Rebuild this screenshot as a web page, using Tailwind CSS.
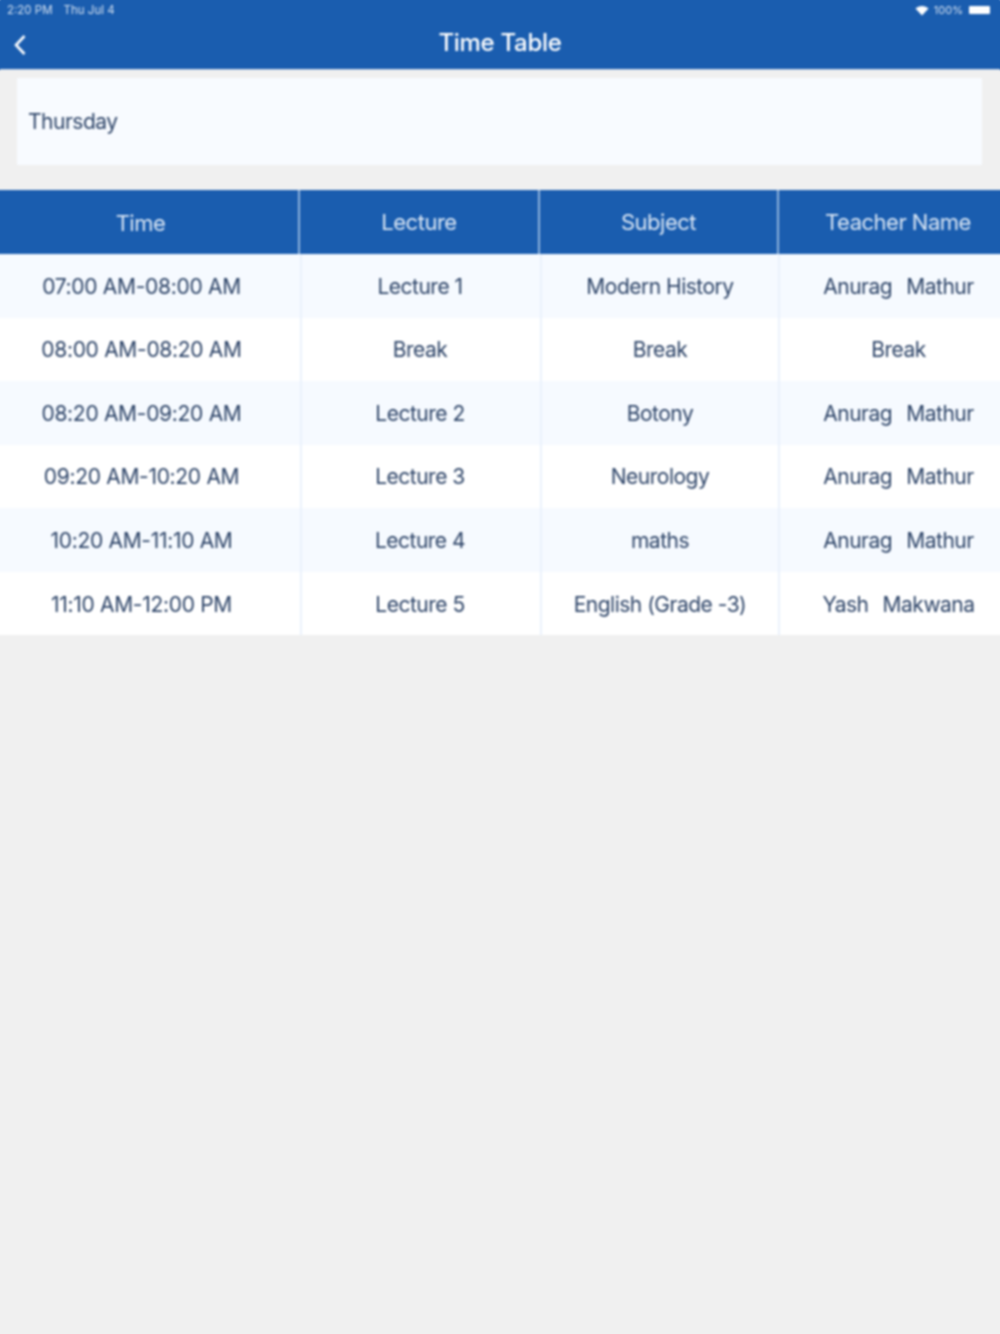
<!DOCTYPE html>
<html lang="en">
<head>
    <meta charset="UTF-8">
    <meta name="viewport" content="width=device-width, initial-scale=1.0">
    <title>Time Table</title>
    <script src="https://cdn.jsdelivr.net/npm/@tailwindcss/browser@4"></script>
</head>
<body class="bg-[#f0f0f0] overflow-hidden">
<div class="min-h-screen blur-[0.9px] font-['Inter',sans-serif] text-[#2c4367] text-[21px] tracking-[-0.5px]">
    <!-- status bar + nav; the shadows keep the blur from fading the screen edges -->
    <header class="bg-[#1a5daf] h-[70px] text-white border-b border-[#c9d6e6] shadow-[4px_0_0_#1a5daf,-4px_0_0_#1a5daf,0_-4px_0_#1a5daf]">
        <div class="h-[20px] flex items-center justify-between pl-[7px] pr-[10px] text-[11.5px] leading-[20px] tracking-normal text-white/80">
            <div class="flex gap-[11px]">
                <span>2:20 PM</span>
                <span>Thu Jul 4</span>
            </div>
            <div class="flex items-center gap-[5px]">
                <svg width="14" height="11" viewBox="0 0 14 11" fill="white"><path d="M7 10.5 L0.5 3.6 C4 0.2 10 0.2 13.5 3.6 Z"/></svg>
                <span class="text-[11px]">100%</span>
                <div class="w-[21px] h-[8px] bg-white rounded-[1px] ml-[1px]"></div>
            </div>
        </div>
        <div class="relative h-[44px] flex items-center justify-center">
            <svg class="absolute left-[13px] top-[14px]" width="14" height="22" viewBox="0 0 14 22" fill="none" stroke="white" stroke-width="2.6"><path d="M11.5 2 L3 11 L11.5 20"/></svg>
            <h1 class="text-[24px] font-medium tracking-[-0.3px] pt-[2px]">Time Table</h1>
        </div>
    </header>

    <div class="pl-[17px] pr-[18px] pt-[8px] pb-[25px]">
        <div class="bg-[#f8fbff] h-[87px] flex items-center px-[11px]">Thursday</div>
    </div>

    <!-- header row, its dividers sit 2px left of the body ones -->
    <div class="grid grid-cols-[298px_240px_239px_223px] h-[64px] pt-[2px] bg-[#1a5daf] text-[#dbe7f5] text-[22px] shadow-[4px_0_0_#1a5daf,-4px_0_0_#1a5daf]">
        <div class="flex items-center justify-center pr-[17px]">Time</div>
        <div class="flex items-center justify-center border-l-2 border-[#8fb2dc] -mt-[2px]">Lecture</div>
        <div class="flex items-center justify-center border-l-2 border-[#8fb2dc] -mt-[2px]">Subject</div>
        <div class="flex items-center justify-center border-l-2 border-[#8fb2dc] -mt-[2px] pl-[17px]">Teacher Name</div>
    </div>

    <div class="grid grid-cols-[300px_240px_238px_222px]">
        <div class="bg-[#f6faff] h-[64px] pt-[2px] flex items-center justify-center pr-[17px] tracking-[-0.3px] shadow-[-4px_0_0_#f6faff]">07:00 AM-08:00 AM</div>
        <div class="bg-[#f6faff] h-[64px] pt-[2px] pr-[2px] flex items-center justify-center border-l-2 border-[#eaf2fb]">Lecture 1</div>
        <div class="bg-[#f6faff] h-[64px] pt-[2px] flex items-center justify-center border-l-2 border-[#eaf2fb]">Modern History</div>
        <div class="bg-[#f6faff] h-[64px] pt-[2px] flex items-center justify-center border-l-2 border-[#eaf2fb] pl-[17px] whitespace-pre [word-spacing:-0.7px] shadow-[4px_0_0_#f6faff]">Anurag   Mathur</div>

        <div class="bg-white h-[63px] flex items-center justify-center pr-[17px] tracking-[-0.3px] shadow-[-4px_0_0_#fff]">08:00 AM-08:20 AM</div>
        <div class="bg-white h-[63px] pr-[2px] flex items-center justify-center border-l-2 border-[#eaf2fb]">Break</div>
        <div class="bg-white h-[63px] flex items-center justify-center border-l-2 border-[#eaf2fb]">Break</div>
        <div class="bg-white h-[63px] flex items-center justify-center border-l-2 border-[#eaf2fb] pl-[17px] shadow-[4px_0_0_#fff]">Break</div>

        <div class="bg-[#f6faff] h-[64px] pt-[2px] flex items-center justify-center pr-[17px] tracking-[-0.3px] shadow-[-4px_0_0_#f6faff]">08:20 AM-09:20 AM</div>
        <div class="bg-[#f6faff] h-[64px] pt-[2px] pr-[2px] flex items-center justify-center border-l-2 border-[#eaf2fb]">Lecture 2</div>
        <div class="bg-[#f6faff] h-[64px] pt-[2px] flex items-center justify-center border-l-2 border-[#eaf2fb]">Botony</div>
        <div class="bg-[#f6faff] h-[64px] pt-[2px] flex items-center justify-center border-l-2 border-[#eaf2fb] pl-[17px] whitespace-pre [word-spacing:-0.7px] shadow-[4px_0_0_#f6faff]">Anurag   Mathur</div>

        <div class="bg-white h-[63px] flex items-center justify-center pr-[17px] tracking-[-0.3px] shadow-[-4px_0_0_#fff]">09:20 AM-10:20 AM</div>
        <div class="bg-white h-[63px] pr-[2px] flex items-center justify-center border-l-2 border-[#eaf2fb]">Lecture 3</div>
        <div class="bg-white h-[63px] flex items-center justify-center border-l-2 border-[#eaf2fb]">Neurology</div>
        <div class="bg-white h-[63px] flex items-center justify-center border-l-2 border-[#eaf2fb] pl-[17px] whitespace-pre [word-spacing:-0.7px] shadow-[4px_0_0_#fff]">Anurag   Mathur</div>

        <div class="bg-[#f6faff] h-[64px] pt-[2px] flex items-center justify-center pr-[17px] tracking-[-0.3px] shadow-[-4px_0_0_#f6faff]">10:20 AM-11:10 AM</div>
        <div class="bg-[#f6faff] h-[64px] pt-[2px] pr-[2px] flex items-center justify-center border-l-2 border-[#eaf2fb]">Lecture 4</div>
        <div class="bg-[#f6faff] h-[64px] pt-[2px] flex items-center justify-center border-l-2 border-[#eaf2fb]">maths</div>
        <div class="bg-[#f6faff] h-[64px] pt-[2px] flex items-center justify-center border-l-2 border-[#eaf2fb] pl-[17px] whitespace-pre [word-spacing:-0.7px] shadow-[4px_0_0_#f6faff]">Anurag   Mathur</div>

        <div class="bg-white h-[63px] pt-[2px] flex items-center justify-center pr-[17px] tracking-[-0.3px] shadow-[-4px_0_0_#fff]">11:10 AM-12:00 PM</div>
        <div class="bg-white h-[63px] pt-[2px] pr-[2px] flex items-center justify-center border-l-2 border-[#eaf2fb]">Lecture 5</div>
        <div class="bg-white h-[63px] pt-[2px] flex items-center justify-center border-l-2 border-[#eaf2fb]">English (Grade -3)</div>
        <div class="bg-white h-[63px] pt-[2px] flex items-center justify-center border-l-2 border-[#eaf2fb] pl-[17px] whitespace-pre [word-spacing:-0.7px] shadow-[4px_0_0_#fff]">Yash   Makwana</div>
    </div>
</div>
</body>
</html>
